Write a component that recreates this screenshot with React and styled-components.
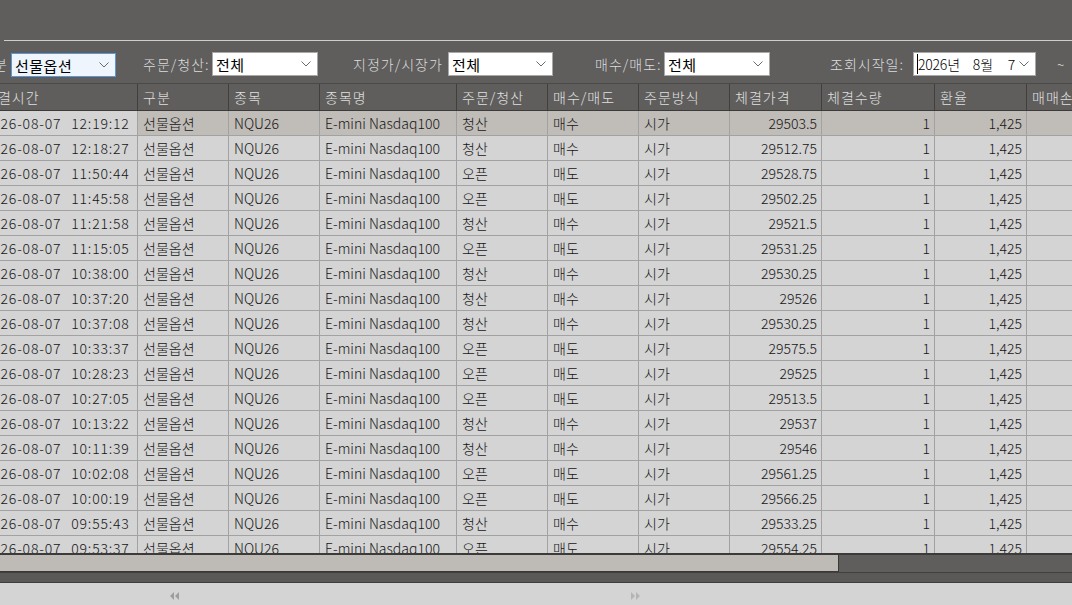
import React from "react";
import styled, { createGlobalStyle } from "styled-components";

const COLS = [
  { title: "체결시간", w: 159 },
  { title: "구분", w: 91 },
  { title: "종목", w: 91 },
  { title: "종목명", w: 137 },
  { title: "주문/청산", w: 91 },
  { title: "매수/매도", w: 91 },
  { title: "주문방식", w: 91 },
  { title: "체결가격", w: 92 },
  { title: "체결수량", w: 113 },
  { title: "환율", w: 92 },
  { title: "매매손익", w: 120 }
];

const TEMPLATE = COLS.map((c) => c.w + "px").join(" ");

const TRADES = [
  ["12:19:12", "청산", "매수", "29503.5"],
  ["12:18:27", "청산", "매수", "29512.75"],
  ["11:50:44", "오픈", "매도", "29528.75"],
  ["11:45:58", "오픈", "매도", "29502.25"],
  ["11:21:58", "청산", "매수", "29521.5"],
  ["11:15:05", "오픈", "매도", "29531.25"],
  ["10:38:00", "청산", "매수", "29530.25"],
  ["10:37:20", "청산", "매수", "29526"],
  ["10:37:08", "청산", "매수", "29530.25"],
  ["10:33:37", "오픈", "매도", "29575.5"],
  ["10:28:23", "오픈", "매도", "29525"],
  ["10:27:05", "오픈", "매도", "29513.5"],
  ["10:13:22", "청산", "매수", "29537"],
  ["10:11:39", "청산", "매수", "29546"],
  ["10:02:08", "오픈", "매도", "29561.25"],
  ["10:00:19", "오픈", "매도", "29566.25"],
  ["09:55:43", "청산", "매수", "29533.25"],
  ["09:53:37", "오픈", "매도", "29554.25"]
];

const GlobalStyle = createGlobalStyle`
  html, body {
    margin: 0;
    padding: 0;
    background: #5f5e5c;
  }
  body {
    font-family: "Noto Sans CJK KR", "Noto Sans", sans-serif;
    font-size: 14px;
    font-weight: 300;
  }
`;

const Page = styled.div`
  width: 1072px;
  height: 605px;
  overflow: hidden;
  background: #5f5e5c;
  display: flex;
  flex-direction: column;
`;

const TopBar = styled.div`
  height: 40px;
  flex: none;
`;

const Rule = styled.div`
  height: 1px;
  margin-left: 4px;
  background: #cfcecc;
  flex: none;
`;

const Viewport = styled.div`
  overflow: hidden;
  flex: none;
`;

/* horizontally scrolled panel: scrollLeft = 21 */
const Scrolled = styled.div`
  margin-left: -21px;
  width: 1168px;
`;

const FilterRow = styled.div`
  height: 42px;
  box-sizing: border-box;
  padding-top: 4px;
  display: flex;
  align-items: center;
`;

const Label = styled.div`
  width: ${(p) => p.$w}px;
  margin-left: ${(p) => p.$ml}px;
  color: #dcdcdc;
  letter-spacing: 1px;
  white-space: nowrap;
  overflow: hidden;
  line-height: 20px;
  flex: none;
`;

const Select = styled.div`
  width: ${(p) => p.$w}px;
  height: 24px;
  box-sizing: border-box;
  display: flex;
  align-items: center;
  justify-content: space-between;
  padding: 0 6px 0 3px;
  background: ${(p) => (p.$focus ? "#eef5fd" : "#ffffff")};
  border: 1px solid ${(p) => (p.$focus ? "#5b97d6" : "#a8a8a8")};
  margin-top: ${(p) => (p.$focus ? 2 : 0)}px;
  color: #000;
  font-size: 15px;
  font-weight: 400;
  flex: none;
  overflow: hidden;
`;

const SelectText = styled.span`
  white-space: pre;
  overflow: hidden;
  letter-spacing: 0.5px;
`;

const DateText = styled.span`
  display: flex;
  white-space: nowrap;
  overflow: hidden;
  border-left: 1px solid #000;
  font-size: 14px;
  font-weight: 300;
  letter-spacing: -0.2px;
`;

const DatePart = styled.span`
  margin-left: ${(p) => p.$ml || 0}px;
`;

const Tilde = styled.div`
  margin-left: 21px;
  color: #dcdcdc;
  flex: none;
`;

const HeaderRow = styled.div`
  display: grid;
  grid-template-columns: ${TEMPLATE};
  height: 28px;
  box-sizing: border-box;
  border-top: 1px solid #4b4a48;
  border-bottom: 1px solid #3c3b3a;
`;

const HeadCell = styled.div`
  box-sizing: border-box;
  border-right: 1px solid #403f3e;
  padding-left: 5px;
  color: #e0e0e0;
  letter-spacing: 1px;
  display: flex;
  align-items: center;
  white-space: nowrap;
  overflow: hidden;
`;

const Body = styled.div`
  height: 442px;
  overflow: hidden;
  background: #d4d4d4;
`;

const Row = styled.div`
  display: grid;
  grid-template-columns: ${TEMPLATE};
  height: 25px;
  box-sizing: border-box;
  border-bottom: 1px solid #a2a2a2;
`;

const Cell = styled.div`
  box-sizing: border-box;
  border-right: 1px solid #a2a2a2;
  background: ${(p) => (p.$sel ? "#c0bcb8" : "#d4d4d4")};
  color: #161616;
  display: flex;
  align-items: center;
  justify-content: ${(p) => (p.$right ? "flex-end" : "flex-start")};
  padding: 0 ${(p) => (p.$right ? 4 : 0)}px 0 ${(p) => (p.$right ? 0 : 5)}px;
  letter-spacing: ${(p) => (p.$wide ? 0.8 : 0)}px;
  white-space: pre;
  overflow: hidden;
`;

const TimePart = styled.span`
  margin-left: 10px;
`;

const Scrollbar = styled.div`
  height: 20px;
  box-sizing: border-box;
  border-top: 2px solid #3c3b3a;
  border-bottom: 1px solid #41403f;
  background: #5f5e5c;
  flex: none;
`;

const Thumb = styled.div`
  width: 839px;
  height: 17px;
  box-sizing: border-box;
  background: #bebab6;
  border-right: 1px solid #3a3938;
  border-bottom: 1px solid #3a3938;
`;

const Strip = styled.div`
  height: 10px;
  box-sizing: border-box;
  background: #5a5957;
  border-bottom: 1px solid #3f3e3d;
  flex: none;
`;

const BottomBar = styled.div`
  height: 22px;
  background: #d4d4d4;
  display: flex;
  align-items: center;
  padding-left: 170px;
  padding-top: 3px;
  box-sizing: border-box;
  flex: none;
`;

const ArrowBtn = styled.div`
  margin-left: ${(p) => p.$ml || 0}px;
  display: flex;
`;

const Chevron = () => (
  <svg width="10" height="6" viewBox="0 0 10 6">
    <polyline points="0.5,0.5 5,5 9.5,0.5" fill="none" stroke="#6a6a6a" strokeWidth="1" />
  </svg>
);

const DoubleArrow = ({ dir }) => (
  <svg width="9" height="8" viewBox="0 0 9 8">
    {dir === "left" ? (
      <g fill="#9d9d9d">
        <polygon points="4,0 4,8 0,4" />
        <polygon points="9,0 9,8 5,4" />
      </g>
    ) : (
      <g fill="#b4b4b4">
        <polygon points="0,0 0,8 4,4" />
        <polygon points="5,0 5,8 9,4" />
      </g>
    )}
  </svg>
);

const Filter = ({ label, labelW, ml, selW, value, focus }) => (
  <>
    <Label $w={labelW} $ml={ml}>{label}</Label>
    <Select $w={selW} $focus={focus}>
      <SelectText>{value}</SelectText>
      <Chevron />
    </Select>
  </>
);

const App = () => (
  <Page>
    <GlobalStyle />
    <TopBar />
    <Rule />
    <Viewport>
      <Scrolled>
        <FilterRow>
          <Filter label="구분" labelW={31} ml={1} selW={105} value="선물옵션" focus />
          <Filter label="주문/청산:" labelW={69} ml={27} selW={106} value="전체" />
          <Filter label="지정가/시장가" labelW={95} ml={35} selW={105} value="전체" />
          <Filter label="매수/매도:" labelW={69} ml={42} selW={106} value="전체" />
          <Label $w={83} $ml={60}>조회시작일:</Label>
          <Select $w={123}>
            <DateText>
              <DatePart>2026년</DatePart>
              <DatePart $ml={13}>8월</DatePart>
              <DatePart $ml={15}>7</DatePart>
            </DateText>
            <Chevron />
          </Select>
          <Tilde>~</Tilde>
        </FilterRow>

        <HeaderRow>
          {COLS.map((c) => (
            <HeadCell key={c.title}>{c.title}</HeadCell>
          ))}
        </HeaderRow>

        <Body>
          {TRADES.map(([time, side, dir, price], i) => {
            const sel = i === 0;
            return (
              <Row key={time}>
                <Cell $wide>
                  2026-08-07<TimePart>{time}</TimePart>
                </Cell>
                <Cell $sel={sel}>선물옵션</Cell>
                <Cell $sel={sel}>NQU26</Cell>
                <Cell $sel={sel}>E-mini Nasdaq100</Cell>
                <Cell $sel={sel}>{side}</Cell>
                <Cell $sel={sel}>{dir}</Cell>
                <Cell $sel={sel}>시가</Cell>
                <Cell $sel={sel} $right>{price}</Cell>
                <Cell $sel={sel} $right>1</Cell>
                <Cell $sel={sel} $right>1,425</Cell>
                <Cell $sel={sel} />
              </Row>
            );
          })}
        </Body>
      </Scrolled>
    </Viewport>

    <Scrollbar>
      <Thumb />
    </Scrollbar>
    <Strip />
    <BottomBar>
      <ArrowBtn>
        <DoubleArrow dir="left" />
      </ArrowBtn>
      <ArrowBtn $ml={452}>
        <DoubleArrow dir="right" />
      </ArrowBtn>
    </BottomBar>
  </Page>
);

export default App;
